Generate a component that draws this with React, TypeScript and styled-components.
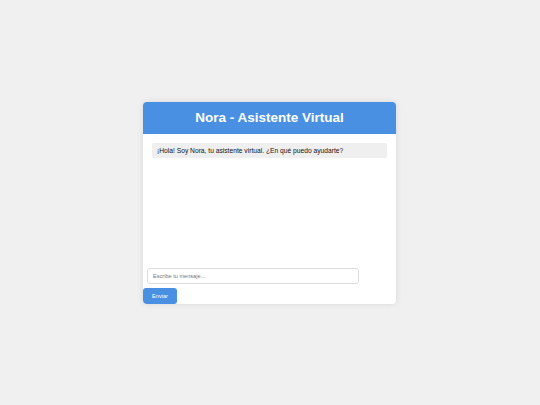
import styled, { createGlobalStyle } from "styled-components";

const GlobalStyle = createGlobalStyle`
  html, body {
    margin: 0;
    padding: 0;
    background: #f0f0f0;
    font-family: "Liberation Sans", Arial, sans-serif;
  }
`;

const Page = styled.div`
  width: 540px;
  height: 405px;
  display: flex;
  align-items: center;
  justify-content: center;
`;

const Card = styled.div`
  width: 253px;
  height: 202px;
  background: #fff;
  border-radius: 4px;
  box-shadow: 0 0 6px rgba(0, 0, 0, 0.1);
  display: flex;
  flex-direction: column;
  overflow: hidden;
  margin-left: -1px;
`;

const Header = styled.div`
  height: 32px;
  background: #4a90e2;
  color: #fff;
  font-size: 13.5px;
  font-weight: bold;
  display: flex;
  align-items: center;
  justify-content: center;
`;

const Messages = styled.div`
  height: 130px;
  padding: 9px;
  box-sizing: border-box;
  display: flex;
  flex-direction: column;
  gap: 5px;
`;

const Bubble = styled.div`
  background: #efefef;
  border-radius: 2px;
  padding: 0 5px;
  height: 15px;
  display: flex;
  align-items: center;
  font-size: 6.7px;
  color: #111;
`;

const InputBar = styled.div`
  display: flex;
  flex-direction: column;
  align-items: flex-start;
  gap: 4px;
  padding-top: 4px;
`;

const TextInput = styled.input`
  margin-left: 4px;
  width: 212px;
  height: 16px;
  box-sizing: border-box;
  border: 1px solid #ddd;
  border-radius: 3px;
  padding: 0 5px;
  font-family: "Liberation Sans", Arial, sans-serif;
  font-size: 5.6px;
  outline: none;

  &::placeholder {
    color: #777;
  }
`;

const SendButton = styled.button`
  width: 34px;
  height: 16px;
  border: none;
  border-radius: 3px;
  background: #4a90e2;
  color: #fff;
  font-family: "Liberation Sans", Arial, sans-serif;
  font-size: 5.6px;
  padding: 0;
`;

export default function App() {
  return (
    <Page>
      <GlobalStyle />
      <Card>
        <Header>Nora - Asistente Virtual</Header>
        <Messages>
          <Bubble>¡Hola! Soy Nora, tu asistente virtual. ¿En qué puedo ayudarte?</Bubble>
        </Messages>
        <InputBar>
          <TextInput placeholder="Escribe tu mensaje..." />
          <SendButton>Enviar</SendButton>
        </InputBar>
      </Card>
    </Page>
  );
}
